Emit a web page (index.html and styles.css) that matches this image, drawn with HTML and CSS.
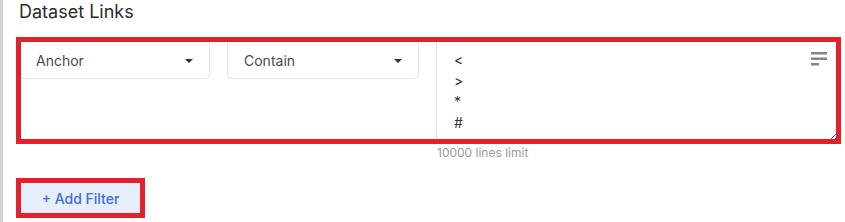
FILE: index.html
```html
<!DOCTYPE html>
<html lang="en">
<head>
<meta charset="utf-8">
<title>Dataset Links</title>
<link rel="stylesheet" href="styles.css">
</head>
<body>
<div class="section">
  <h2 class="title">Dataset Links</h2>
  <div class="filter-row highlight">
    <div class="select"><span>Anchor</span><i class="caret"></i></div>
    <div class="select"><span>Contain</span><i class="caret"></i></div>
    <div class="editor">
      <textarea class="patterns" spellcheck="false"><
>
*
#</textarea>
      <svg class="menu-icon" width="16" height="14" viewBox="0 0 16 14"><rect x="0" y="0" width="16" height="2.5" fill="#858585"/><rect x="0" y="5.5" width="16" height="2.5" fill="#858585"/><rect x="0" y="11" width="8" height="2.5" fill="#858585"/></svg>
    </div>
  </div>
  <div class="filter-footer">
    <div class="hint">10000 lines limit</div>
  </div>
  <button class="add-btn highlight">+ Add Filter</button>
</div>
</body>
</html>
```
FILE: styles.css
```css
html, body {
  margin: 0;
  padding: 0;
  background: #fff;
}
body {
  font-family: Inter, "Noto Sans", sans-serif;
  color: #333;
}
.section {
  border-left: 3px solid #d4d4d4;
  padding-left: 16px;
  min-height: 222px;
  box-sizing: border-box;
}
.title {
  margin: 0 0 16px 0;
  font-size: 18px;
  line-height: 24px;
  font-weight: 400;
  color: #2b2b2b;
}
.highlight {
  position: relative;
}
.highlight::after {
  content: "";
  position: absolute;
  inset: -3px;
  border: 5px solid #e3212b;
  pointer-events: none;
}
.filter-row {
  display: grid;
  grid-template-columns: 191px 192px 1fr;
  column-gap: 17px;
  width: 819px;
  height: 101px;
  align-items: start;
}
.select {
  height: 39px;
  box-sizing: border-box;
  border: 1px solid #e6e6e6;
  border-radius: 4px;
  display: flex;
  align-items: center;
  justify-content: space-between;
  padding: 2px 16px 0 16px;
  font-size: 14px;
  color: #4a4a4a;
}
.caret {
  width: 0;
  height: 0;
  border-left: 4px solid transparent;
  border-right: 4px solid transparent;
  border-top: 4px solid #333;
}
.editor {
  position: relative;
  height: 101px;
}
.patterns {
  display: block;
  width: 100%;
  height: 101px;
  box-sizing: border-box;
  border: none;
  border-left: 1px solid #e2e2e2;
  padding: 9px 40px 0 17px;
  margin: 0;
  font-family: Inter, "Noto Sans", sans-serif;
  font-size: 14px;
  line-height: 21px;
  color: #333;
  resize: both;
  outline: none;
  background: #fff;
}
.menu-icon {
  position: absolute;
  top: 12px;
  right: 11px;
}
.filter-footer {
  display: grid;
  grid-template-columns: 191px 192px 1fr;
  column-gap: 17px;
  width: 819px;
  margin-top: 4px;
}
.hint {
  grid-column: 3;
  padding-left: 1px;
  font-size: 12px;
  line-height: 16px;
  color: #9a9a9a;
}
.add-btn {
  display: block;
  margin: 20px 0 0 0;
  width: 123px;
  height: 34px;
  border: none;
  border-radius: 2px;
  background: #e6eefc;
  color: #3b6fd8;
  font-family: Inter, "Noto Sans", sans-serif;
  font-size: 14px;
  font-weight: 500;
  padding: 0;
  cursor: pointer;
}
```
